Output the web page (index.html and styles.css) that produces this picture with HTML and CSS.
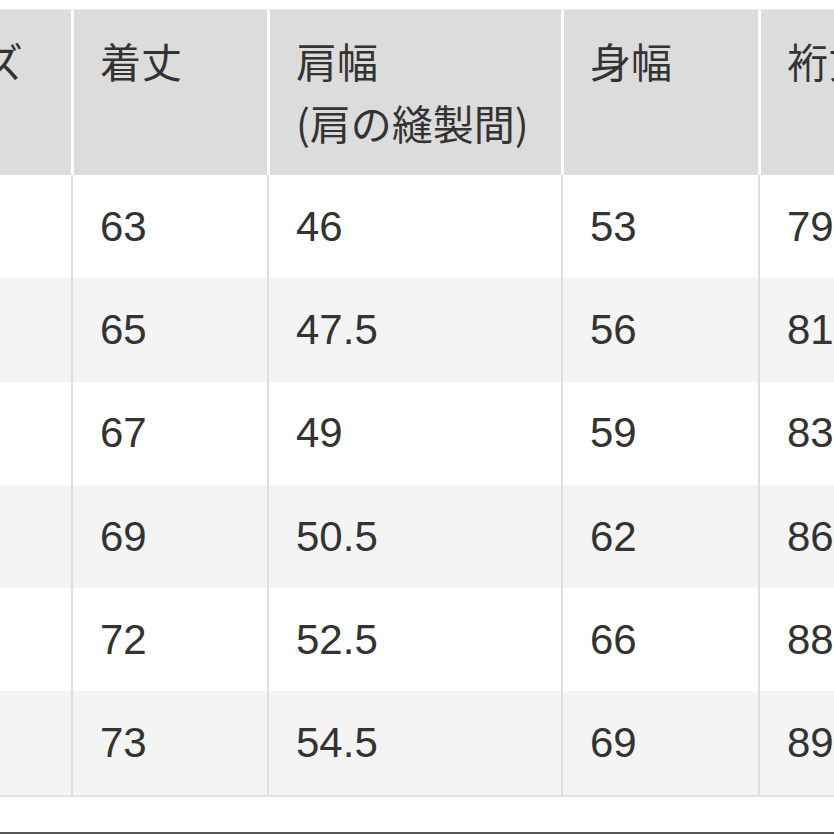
FILE: index.html
```html
<!DOCTYPE html>
<html lang="ja">
<head>
<meta charset="utf-8">
<title>サイズ表</title>
<link rel="stylesheet" href="styles.css">
</head>
<body>
<div class="frame">
  <div class="size-table">
    <div class="row head">
      <div class="cell">サイズ</div>
      <div class="cell">着丈</div>
      <div class="cell">肩幅<br>(肩の縫製間)</div>
      <div class="cell">身幅</div>
      <div class="cell">裄丈</div>
    </div>
    <div class="row body">
      <div class="cell">XS</div><div class="cell">63</div><div class="cell">46</div><div class="cell">53</div><div class="cell">79</div>
    </div>
    <div class="row body alt">
      <div class="cell">S</div><div class="cell">65</div><div class="cell">47.5</div><div class="cell">56</div><div class="cell">81</div>
    </div>
    <div class="row body">
      <div class="cell">M</div><div class="cell">67</div><div class="cell">49</div><div class="cell">59</div><div class="cell">83</div>
    </div>
    <div class="row body alt">
      <div class="cell">L</div><div class="cell">69</div><div class="cell">50.5</div><div class="cell">62</div><div class="cell">86</div>
    </div>
    <div class="row body">
      <div class="cell">XL</div><div class="cell">72</div><div class="cell">52.5</div><div class="cell">66</div><div class="cell">88</div>
    </div>
    <div class="row body alt last">
      <div class="cell">XXL</div><div class="cell">73</div><div class="cell">54.5</div><div class="cell">69</div><div class="cell">89</div>
    </div>
  </div>
  <div class="bottom-bar"></div>
</div>
</body>
</html>
```

FILE: styles.css
```css
html, body {
  margin: 0;
  padding: 0;
  background: #ffffff;
}

.frame {
  width: 834px;
  height: 834px;
  overflow: hidden;
  position: relative;
  background: #ffffff;
  display: flex;
  flex-direction: column;
}

.size-table {
  margin-top: 9px;
  margin-left: -125px;
  border-top: 1px solid #ececec;
  font-family: "Liberation Sans", "Noto Sans CJK JP", sans-serif;
  color: #333333;
}

.row {
  display: grid;
  grid-template-columns: 196px 196px 294px 197px 250px;
}

.cell {
  box-sizing: border-box;
}

.head {
  height: 165px;
  background: #dcdcdc;
}

.head .cell {
  font-family: "Noto Sans CJK JP", "Liberation Sans", sans-serif;
  font-size: 41px;
  line-height: 62px;
  padding-top: 19px;
  padding-left: 26px;
  border-left: 3px solid #ffffff;
  color: #333333;
}

.head .cell:first-child,
.body .cell:first-child {
  border-left: none;
}

.body {
  height: 103.3px;
  background: #ffffff;
}

.body.alt {
  background: #f4f4f4;
}

.body .cell {
  display: flex;
  align-items: center;
  font-size: 42px;
  border-left: 2px solid #dedede;
  padding-left: 27px;
}

.body.last {
  border-bottom: 2px solid #e2e2e2;
}

.bottom-bar {
  margin-top: auto;
  height: 2px;
  background: #555555;
}
```
